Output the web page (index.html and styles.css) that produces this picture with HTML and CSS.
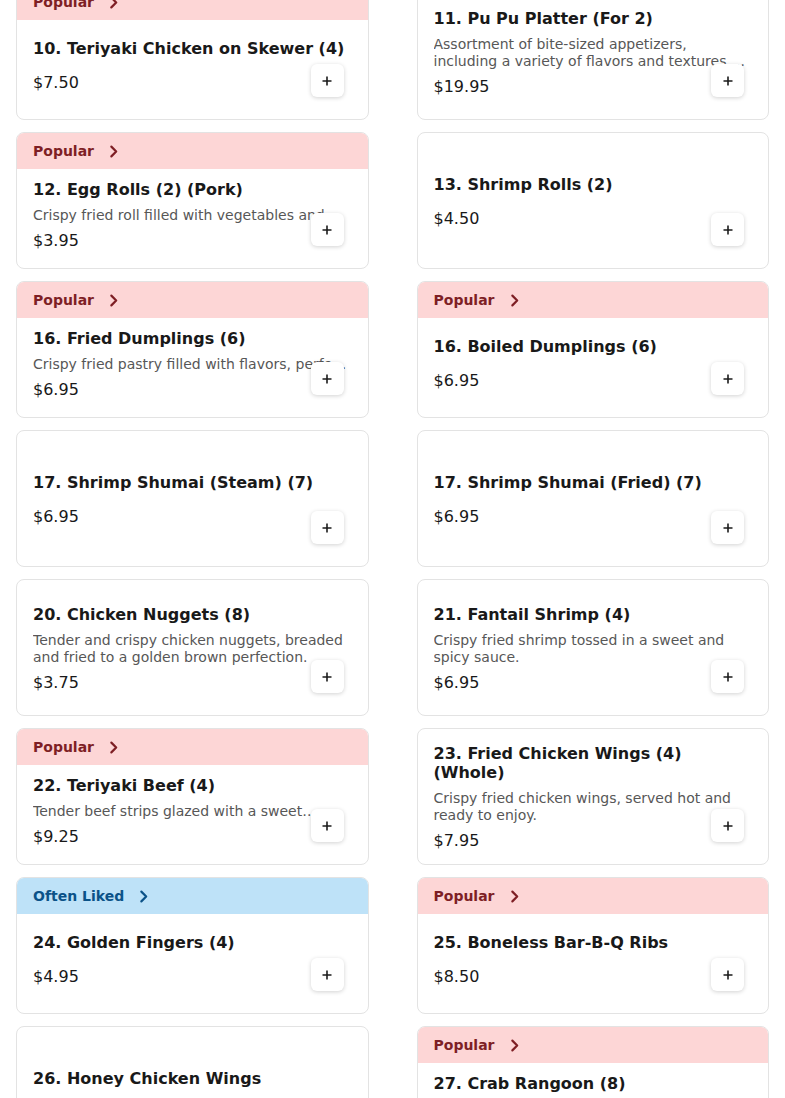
FILE: index.html
```html
<!DOCTYPE html>
<html lang="en">
<head>
<meta charset="utf-8">
<title>Menu</title>
<link rel="stylesheet" href="styles.css">
</head>
<body>
<div class="grid">

  <div class="card">
    <div class="tag tag-popular">Popular <svg class="chev" viewBox="0 0 8 12"><path d="M2 1.5l4.5 4.5-4.5 4.5"/></svg></div>
    <div class="body">
      <div class="title">10. Teriyaki Chicken on Skewer (4)</div>
      <div class="price">$7.50</div>
    </div>
    <button class="add"><svg viewBox="0 0 12 12"><path d="M6 1.5v9M1.5 6h9"/></svg></button>
  </div>

  <div class="card plain">
    <div class="body">
      <div class="title">11. Pu Pu Platter (For 2)</div>
      <div class="desc clamp2">Assortment of bite-sized appetizers, including a variety of flavors and textures, perfect for sharing with friends.</div>
      <div class="price">$19.95</div>
    </div>
    <button class="add"><svg viewBox="0 0 12 12"><path d="M6 1.5v9M1.5 6h9"/></svg></button>
  </div>

  <div class="card">
    <div class="tag tag-popular">Popular <svg class="chev" viewBox="0 0 8 12"><path d="M2 1.5l4.5 4.5-4.5 4.5"/></svg></div>
    <div class="body">
      <div class="title">12. Egg Rolls (2) (Pork)</div>
      <div class="desc oneline">Crispy fried roll filled with vegetables and pork.</div>
      <div class="price">$3.95</div>
    </div>
    <button class="add"><svg viewBox="0 0 12 12"><path d="M6 1.5v9M1.5 6h9"/></svg></button>
  </div>

  <div class="card plain">
    <div class="body">
      <div class="title">13. Shrimp Rolls (2)</div>
      <div class="price">$4.50</div>
    </div>
    <button class="add"><svg viewBox="0 0 12 12"><path d="M6 1.5v9M1.5 6h9"/></svg></button>
  </div>

  <div class="card">
    <div class="tag tag-popular">Popular <svg class="chev" viewBox="0 0 8 12"><path d="M2 1.5l4.5 4.5-4.5 4.5"/></svg></div>
    <div class="body">
      <div class="title">16. Fried Dumplings (6)</div>
      <div class="desc oneline">Crispy fried pastry filled with flavors, perfectly pan-fried.</div>
      <div class="price">$6.95</div>
    </div>
    <button class="add"><svg viewBox="0 0 12 12"><path d="M6 1.5v9M1.5 6h9"/></svg></button>
  </div>

  <div class="card">
    <div class="tag tag-popular">Popular <svg class="chev" viewBox="0 0 8 12"><path d="M2 1.5l4.5 4.5-4.5 4.5"/></svg></div>
    <div class="body">
      <div class="title">16. Boiled Dumplings (6)</div>
      <div class="price">$6.95</div>
    </div>
    <button class="add"><svg viewBox="0 0 12 12"><path d="M6 1.5v9M1.5 6h9"/></svg></button>
  </div>

  <div class="card plain">
    <div class="body">
      <div class="title">17. Shrimp Shumai (Steam) (7)</div>
      <div class="price">$6.95</div>
    </div>
    <button class="add"><svg viewBox="0 0 12 12"><path d="M6 1.5v9M1.5 6h9"/></svg></button>
  </div>

  <div class="card plain">
    <div class="body">
      <div class="title">17. Shrimp Shumai (Fried) (7)</div>
      <div class="price">$6.95</div>
    </div>
    <button class="add"><svg viewBox="0 0 12 12"><path d="M6 1.5v9M1.5 6h9"/></svg></button>
  </div>

  <div class="card plain">
    <div class="body">
      <div class="title">20. Chicken Nuggets (8)</div>
      <div class="desc clamp2">Tender and crispy chicken nuggets, breaded and fried to a golden brown perfection.</div>
      <div class="price">$3.75</div>
    </div>
    <button class="add"><svg viewBox="0 0 12 12"><path d="M6 1.5v9M1.5 6h9"/></svg></button>
  </div>

  <div class="card plain">
    <div class="body">
      <div class="title">21. Fantail Shrimp (4)</div>
      <div class="desc clamp2">Crispy fried shrimp tossed in a sweet and spicy sauce.</div>
      <div class="price">$6.95</div>
    </div>
    <button class="add"><svg viewBox="0 0 12 12"><path d="M6 1.5v9M1.5 6h9"/></svg></button>
  </div>

  <div class="card">
    <div class="tag tag-popular">Popular <svg class="chev" viewBox="0 0 8 12"><path d="M2 1.5l4.5 4.5-4.5 4.5"/></svg></div>
    <div class="body">
      <div class="title">22. Teriyaki Beef (4)</div>
      <div class="desc clamp1">Tender beef strips glazed with a sweet teriyaki sauce.</div>
      <div class="price">$9.25</div>
    </div>
    <button class="add"><svg viewBox="0 0 12 12"><path d="M6 1.5v9M1.5 6h9"/></svg></button>
  </div>

  <div class="card plain">
    <div class="body">
      <div class="title">23. Fried Chicken Wings (4) (Whole)</div>
      <div class="desc clamp2">Crispy fried chicken wings, served hot and ready to enjoy.</div>
      <div class="price">$7.95</div>
    </div>
    <button class="add"><svg viewBox="0 0 12 12"><path d="M6 1.5v9M1.5 6h9"/></svg></button>
  </div>

  <div class="card">
    <div class="tag tag-liked">Often Liked <svg class="chev" viewBox="0 0 8 12"><path d="M2 1.5l4.5 4.5-4.5 4.5"/></svg></div>
    <div class="body">
      <div class="title">24. Golden Fingers (4)</div>
      <div class="price">$4.95</div>
    </div>
    <button class="add"><svg viewBox="0 0 12 12"><path d="M6 1.5v9M1.5 6h9"/></svg></button>
  </div>

  <div class="card">
    <div class="tag tag-popular">Popular <svg class="chev" viewBox="0 0 8 12"><path d="M2 1.5l4.5 4.5-4.5 4.5"/></svg></div>
    <div class="body">
      <div class="title">25. Boneless Bar-B-Q Ribs</div>
      <div class="price">$8.50</div>
    </div>
    <button class="add"><svg viewBox="0 0 12 12"><path d="M6 1.5v9M1.5 6h9"/></svg></button>
  </div>

  <div class="card plain">
    <div class="body">
      <div class="title">26. Honey Chicken Wings</div>
      <div class="price">$8.95</div>
    </div>
    <button class="add"><svg viewBox="0 0 12 12"><path d="M6 1.5v9M1.5 6h9"/></svg></button>
  </div>

  <div class="card">
    <div class="tag tag-popular">Popular <svg class="chev" viewBox="0 0 8 12"><path d="M2 1.5l4.5 4.5-4.5 4.5"/></svg></div>
    <div class="body">
      <div class="title">27. Crab Rangoon (8)</div>
      <div class="desc oneline">Crispy wontons filled with crab meat and cream cheese.</div>
      <div class="price">$7.95</div>
    </div>
    <button class="add"><svg viewBox="0 0 12 12"><path d="M6 1.5v9M1.5 6h9"/></svg></button>
  </div>

</div>
</body>
</html>
```

FILE: styles.css
```css
* { box-sizing: border-box; }

html, body {
  margin: 0;
  padding: 0;
  background: #ffffff;
  font-family: "DejaVu Sans", "Noto Sans", sans-serif;
  color: #191919;
}

.grid {
  display: grid;
  grid-template-columns: 1fr 1fr;
  column-gap: 48px;
  row-gap: 12px;
  padding: 0 16px 24px;
  margin-top: -17px;
}

.card {
  position: relative;
  display: flex;
  flex-direction: column;
  min-height: 137px;
  border: 1px solid #e3e3e3;
  border-radius: 8px;
  background: #fff;
  overflow: hidden;
}

.tag {
  display: flex;
  align-items: center;
  height: 36px;
  flex: none;
  padding: 0 16px;
  font-size: 14px;
  font-weight: bold;
}

.tag .chev {
  width: 9px;
  height: 13px;
  margin-left: 15px;
  fill: none;
  stroke: currentColor;
  stroke-width: 2;
  stroke-linecap: round;
  stroke-linejoin: round;
}

.tag-popular {
  background: #fdd6d6;
  color: #7e1f25;
}

.tag-liked {
  background: #bee2f8;
  color: #0b5288;
}

.body {
  flex: 1;
  display: flex;
  flex-direction: column;
  justify-content: center;
  padding: 10px 16px 18px;
}

.plain .body {
  padding: 14px 16px 13px;
}

.title {
  font-size: 16px;
  font-weight: bold;
  line-height: 19px;
  margin-bottom: 8px;
}

.desc {
  font-size: 14px;
  line-height: 17px;
  color: #575757;
}

.oneline {
  white-space: nowrap;
  overflow: hidden;
  text-overflow: ellipsis;
}

.clamp1,
.clamp2 {
  display: -webkit-box;
  -webkit-box-orient: vertical;
  overflow: hidden;
}

.clamp1 { -webkit-line-clamp: 1; }
.clamp2 { -webkit-line-clamp: 2; }

.price {
  font-size: 16px;
  line-height: 19px;
  margin-top: 7px;
}

.add {
  position: absolute;
  right: 24px;
  bottom: 22px;
  width: 33px;
  height: 33px;
  padding: 0;
  border: none;
  border-radius: 6px;
  background: #fff;
  box-shadow: 0 1px 4px rgba(0, 0, 0, 0.18);
  display: flex;
  align-items: center;
  justify-content: center;
}

.add svg {
  width: 12px;
  height: 12px;
  fill: none;
  stroke: #1b1b1b;
  stroke-width: 1.6;
}
```
